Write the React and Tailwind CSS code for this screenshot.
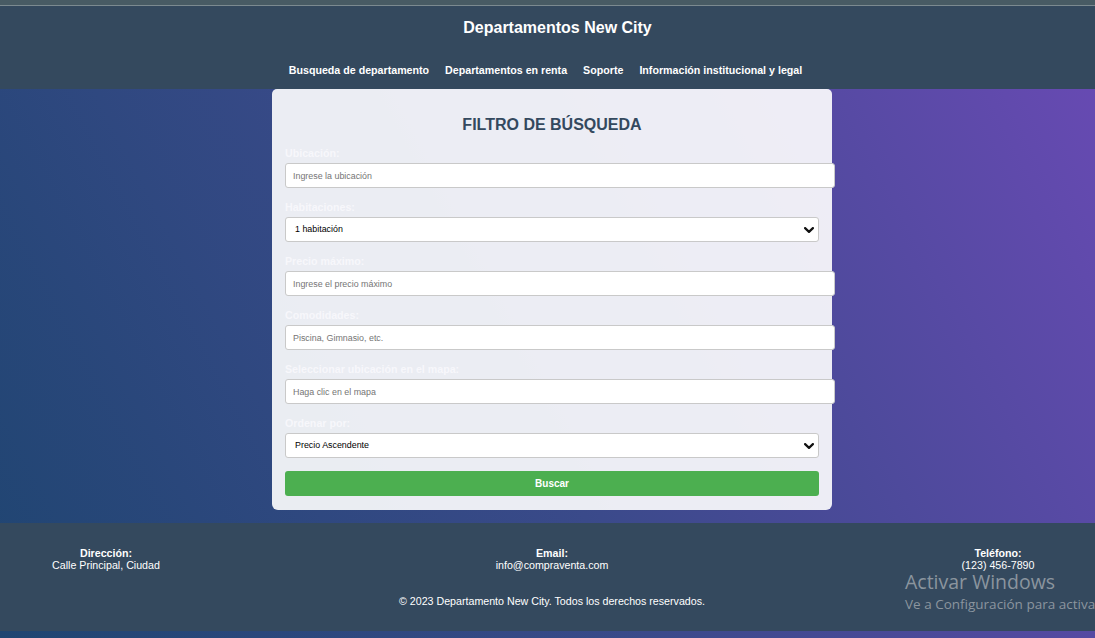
import React, { useState } from 'react';

const NAV = [
  'Busqueda de departamento',
  'Departamentos en renta',
  'Soporte',
  'Información institucional y legal',
];

const FIELDS = [
  { label: 'Ubicación:', kind: 'input', ph: 'Ingrese la ubicación' },
  { label: 'Habitaciones:', kind: 'select', opts: ['1 habitación', '2 habitaciones', '3 habitaciones'] },
  { label: 'Precio máximo:', kind: 'input', ph: 'Ingrese el precio máximo' },
  { label: 'Comodidades:', kind: 'input', ph: 'Piscina, Gimnasio, etc.' },
  { label: 'Seleccionar ubicación en el mapa:', kind: 'input', ph: 'Haga clic en el mapa' },
  { label: 'Ordenar por:', kind: 'select', opts: ['Precio Ascendente', 'Precio Descendente'] },
];

function Chevron() {
  return (
    <svg width="10" height="6" viewBox="0 0 10 6" className="pointer-events-none absolute right-[5px] top-[10px]">
      <polyline points="1.1,1.1 5,4.9 8.9,1.1" fill="none" stroke="#111" strokeWidth="2.2" strokeLinecap="round" strokeLinejoin="round" />
    </svg>
  );
}

function Field({ f }) {
  const [val, setVal] = useState(f.opts ? f.opts[0] : '');
  return (
    <div className="mb-[13px]">
      <label className="block text-[10.67px] leading-[12px] font-bold text-[#f7f7fb] mb-[4px]">{f.label}</label>
      {f.kind === 'input' ? (
        <input value={val} onChange={e => setVal(e.target.value)} placeholder={f.ph}
          className="box-content block w-full h-[23px] px-[7px] bg-white border border-[#c9c9c9] rounded-[3px] text-[8.9px] text-black placeholder-[#757575] outline-none" />
      ) : (
        <div className="relative">
          <select value={val} onChange={e => setVal(e.target.value)}
            className="appearance-none block w-full h-[25px] pl-[9px] pr-6 bg-white border border-[#c9c9c9] rounded-[3px] text-[8.9px] text-black outline-none">
            {f.opts.map(o => <option key={o}>{o}</option>)}
          </select>
          <Chevron />
        </div>
      )}
    </div>
  );
}

export default function App() {
  return (
    <div className="overflow-hidden font-['Liberation_Sans',Arial,sans-serif]">
      <div className="relative w-[1104px] min-h-screen bg-[linear-gradient(62deg,#1f4571_0%,#3a4a8a_45%,#6a4ab5_100%)]">
        {/* top strip */}
        <div className="h-[6px] bg-[#485b64] border-b border-[#7c8a90]" />

        {/* Header */}
        <header className="bg-[#34495e] pt-[12px] pb-[13px] text-white">
          <h1 className="pl-[11px] text-center text-[16px] leading-[19px] font-bold">Departamentos New City</h1>
          <nav className="mt-[27px] pr-[13px] flex justify-center gap-[16px] text-[10.67px] leading-[12px] font-bold">
            {NAV.map(n => <a key={n} href="#" className="text-white">{n}</a>)}
          </nav>
        </header>

        {/* Filter card */}
        <main className="flex justify-center">
          <form onSubmit={e => e.preventDefault()}
            className="w-[560px] bg-white/90 rounded-b-[6px] rounded-t-[5px] px-[13px] pt-[26px] pb-[14px]">
            <h2 className="text-center text-[16px] leading-[19px] font-bold text-[#34495e] mb-[13px]">FILTRO DE BÚSQUEDA</h2>
            {FIELDS.map(f => <Field key={f.label} f={f} />)}
            <button type="submit"
              className="block w-full h-[25px] bg-[#4caf50] rounded-[3px] text-white text-[10px] font-bold cursor-pointer">
              Buscar
            </button>
          </form>
        </main>

        {/* Footer */}
        <footer className="mt-[13px] bg-[#34495e] py-[24px] text-white text-[10.67px] leading-[12px]">
          <div className="flex justify-between">
            <div className="w-[212px] text-center">
              <p className="font-bold">Dirección:</p>
              <p>Calle Principal, Ciudad</p>
            </div>
            <div className="w-[212px] text-center">
              <p className="font-bold">Email:</p>
              <p>info@compraventa.com</p>
            </div>
            <div className="w-[212px] text-center">
              <p className="font-bold">Teléfono:</p>
              <p>(123) 456-7890</p>
            </div>
          </div>
          <p className="mt-[24px] text-center">© 2023 Departamento New City. Todos los derechos reservados.</p>
        </footer>
        <div className="h-[7px]" />

        {/* Windows activation watermark */}
        <div className="absolute left-[905px] top-[572px] whitespace-nowrap font-['Open_Sans','Noto_Sans',sans-serif] text-[#8b959e] pointer-events-none">
          <p className="text-[19.5px] leading-[19px]">Activar Windows</p>
          <p className="text-[13.5px] leading-[17px] mt-[5px]">Ve a Configuración para activar Windows.</p>
        </div>
      </div>
    </div>
  );
}
